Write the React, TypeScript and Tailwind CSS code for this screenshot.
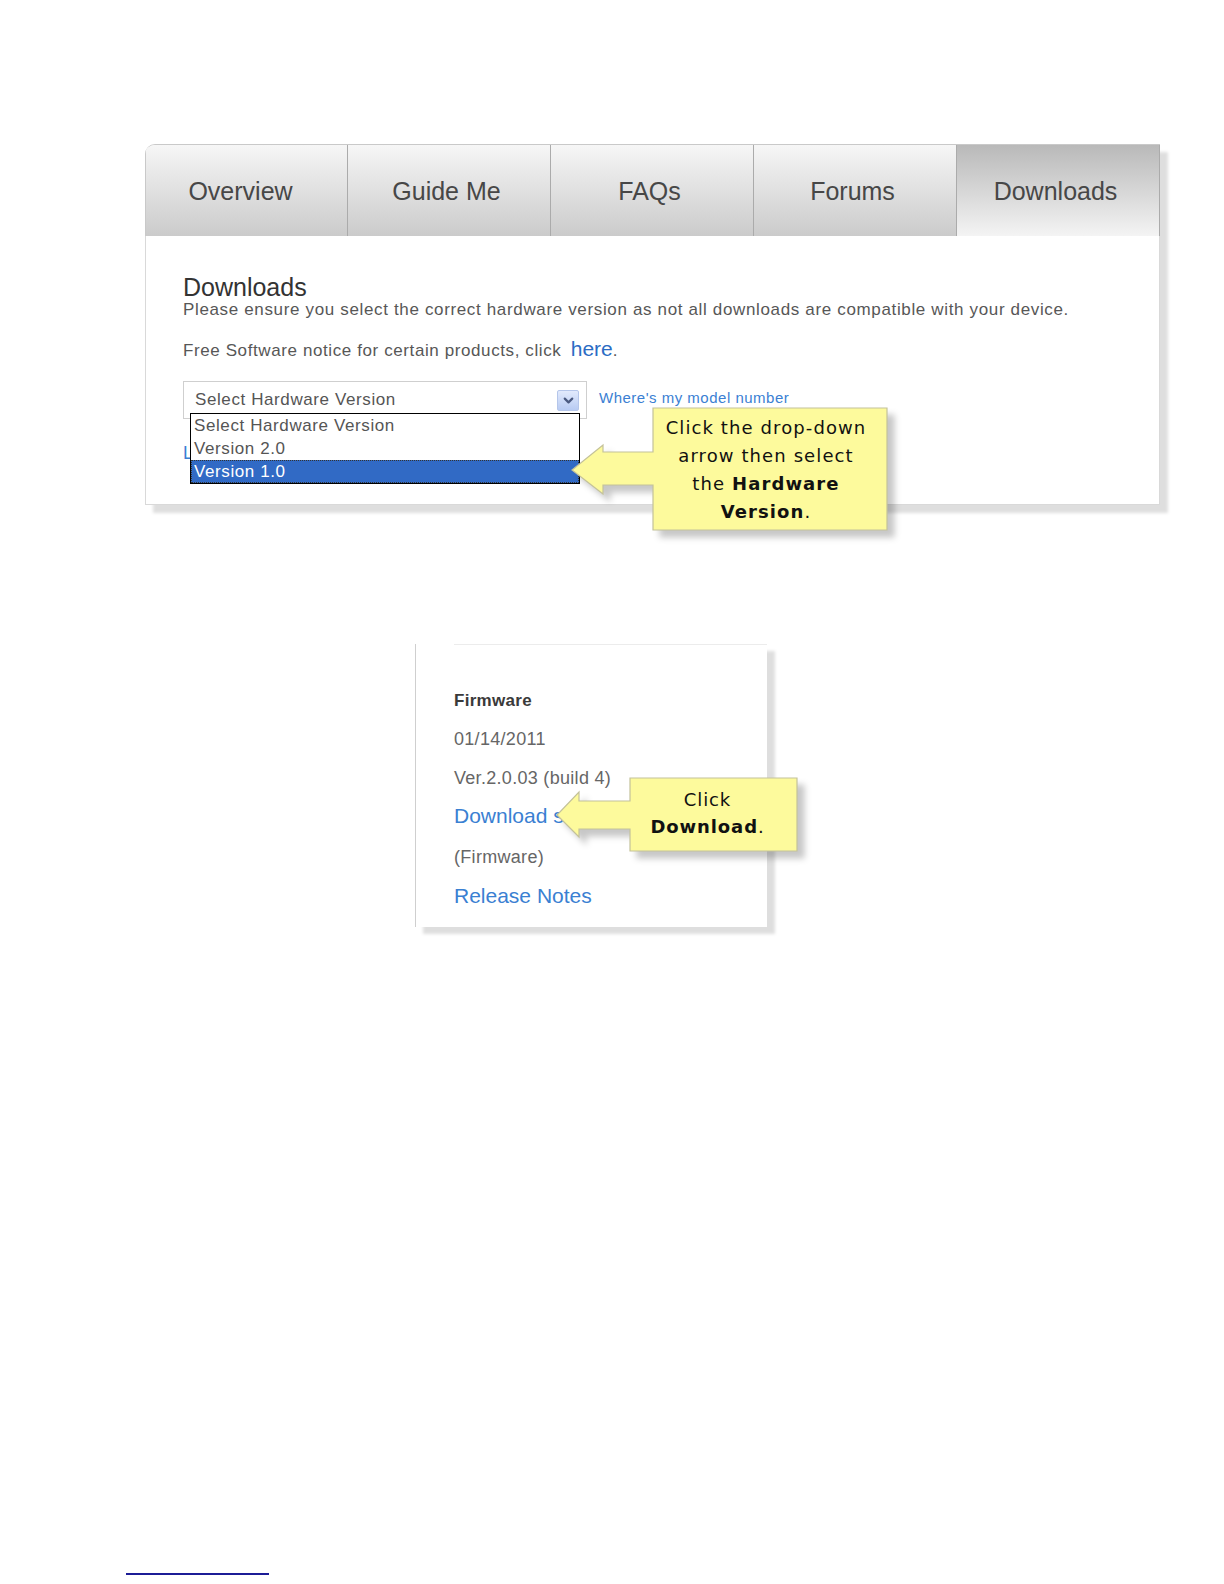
import React from 'react';
import { ChevronDown } from 'lucide-react';

const tabs = ['Overview', 'Guide Me', 'FAQs', 'Forums', 'Downloads'];

const Callout: React.FC<{
  className: string;
  width: number;
  height: number;
  points: string;
  textClass: string;
  children: React.ReactNode;
}> = ({ className, width, height, points, textClass, children }) => (
  <div className={`absolute ${className}`}>
    <svg
      width={width}
      height={height}
      viewBox={`0 0 ${width} ${height}`}
      className="drop-shadow-[7px_7px_3px_rgba(0,0,0,0.22)]"
    >
      <polygon points={points} fill="#fdfa9c" stroke="#c4c29a" strokeWidth="1.2" />
    </svg>
    <div className={`absolute flex flex-col items-center justify-center text-center text-[#111] font-['DejaVu_Sans',sans-serif] ${textClass}`}>
      {children}
    </div>
  </div>
);

export default function App() {
  return (
    <div className="relative w-[1224px] h-[1584px] bg-white font-['Liberation_Sans',Arial,sans-serif]">
      {/* Screenshot 1: downloads tab */}
      <div className="pt-[144px] pl-[145px]">
        <div className="w-[1015px] shadow-[8px_8px_3px_rgba(0,0,0,0.13)] bg-white">
          <div className="grid grid-cols-5 h-[92px] border-t border-[#c9c9c9] rounded-tl-[10px] overflow-hidden">
            {tabs.map((t, i) => (
              <div
                key={t}
                className={`flex items-center justify-center pt-[3px] text-[25px] text-[#474747] border-r border-[#ababab] ${
                  i === 4
                    ? 'bg-gradient-to-b from-[#b9b9b9] to-[#f4f4f4]'
                    : 'bg-gradient-to-b from-[#f6f6f6] to-[#cbcbcb]'
                } ${i === 0 ? 'border-l border-l-[#c9c9c9] pr-[12px]' : 'pr-[5px]'}`}
              >
                {t}
              </div>
            ))}
          </div>
          <div className="h-[269px] border-l border-r border-b border-[#d9d9d9] pl-[37px] pt-[39px]">
            <h2 className="text-[25px] leading-[25px] text-[#333]">Downloads</h2>
            <p className="text-[17px] leading-[20px] tracking-[0.65px] text-[#575757]">
              Please ensure you select the correct hardware version as not all downloads are compatible with your device.
            </p>
            <p className="mt-[19px] text-[17px] leading-[20px] tracking-[0.6px] text-[#575757]">
              Free Software notice for certain products, click{' '}
              <span className="ml-[4px] text-[21px] leading-[20px] tracking-normal text-[#2b6cc4]">here</span>.
            </p>
            <div className="relative mt-[20px] flex items-start">
              <div className="w-[404px] h-[38px] border border-[#cfcfcf] flex items-center justify-between pl-[11px] pr-[7px] text-[17px] tracking-[0.6px] text-[#555]">
                <span>Select Hardware Version</span>
                <span className="w-[22px] h-[21px] rounded-[2px] border border-[#b5c6ea] bg-gradient-to-b from-[#e2eafc] to-[#b8cbf3] flex items-center justify-center">
                  <ChevronDown size={15} strokeWidth={3.5} className="text-[#4b5a80]" />
                </span>
              </div>
              <a className="ml-[12px] mt-[8px] text-[15px] leading-[18px] tracking-[0.5px] text-[#3b7fd3]">Where's my model number</a>
              {/* open list */}
              <div className="absolute left-[7px] top-[32px] w-[390px] h-[71px] border border-black bg-white text-[17px] leading-[23px] tracking-[0.6px] text-[#555]">
                <div className="pl-[3px]">Select Hardware Version</div>
                <div className="pl-[3px]">Version 2.0</div>
                <div className="pl-[3px] h-[23px] bg-[#316ac5] text-white outline-1 outline-dotted outline-[#333] -outline-offset-1">Version 1.0</div>
              </div>
            </div>
            <div className="mt-[24px] text-[18px] leading-[20px] text-[#3b7fd3]">L</div>
          </div>
        </div>
      </div>

      <Callout
        className="left-[560px] top-[400px]"
        width={345}
        height={145}
        points="93,8 327,8 327,130 93,130 93,85 43,85 43,94 12,70 43,45 43,52 93,52"
        textClass="left-[93px] top-[8px] w-[234px] h-[122px] pr-[8px] pt-[2px] text-[18px] leading-[28px] tracking-[1.1px]"
      >
        <span>Click the drop-down</span>
        <span>arrow then select</span>
        <span>
          the <b>Hardware</b>
        </span>
        <span>
          <b>Version</b>.
        </span>
      </Callout>

      {/* Screenshot 2: firmware */}
      <div className="mt-[139px] ml-[415px] w-[352px] h-[283px] bg-white border-l border-[#cfcfcf] shadow-[8px_7px_3px_rgba(0,0,0,0.13)]">
        <div className="ml-[38px] border-t border-[#ececec]" />
        <div className="pl-[38px] pt-[38px]">
          <div className="text-[17px] leading-[36px] font-semibold tracking-[0.3px] text-[#3a3a3a]">Firmware</div>
          <div className="text-[18px] leading-[40px] tracking-[0.3px] text-[#666]">01/14/2011</div>
          <div className="text-[18px] leading-[38px] tracking-[0.3px] text-[#666]">Ver.2.0.03 (build 4)</div>
          <div className="text-[21px] leading-[38px] text-[#3a80d2]">Download s</div>
          <div className="text-[18px] leading-[44px] tracking-[0.3px] text-[#666]">(Firmware)</div>
          <div className="text-[21px] leading-[34px] text-[#3a80d2]">Release Notes</div>
        </div>
      </div>

      <Callout
        className="left-[545px] top-[770px]"
        width={265}
        height={95}
        points="85,8 252,8 252,81 85,81 85,59 34,59 34,67 12,45 34,22 34,31 85,31"
        textClass="left-[85px] top-[8px] w-[167px] h-[73px] pr-[12px] pb-[3px] text-[18px] leading-[27px] tracking-[0.9px]"
      >
        <span>Click</span>
        <span>
          <b>Download</b>.
        </span>
      </Callout>

      {/* page footer rule */}
      <div className="mt-[646px] ml-[126px] w-[143px] h-[2px] bg-[#1c1c96]" />
    </div>
  );
}
